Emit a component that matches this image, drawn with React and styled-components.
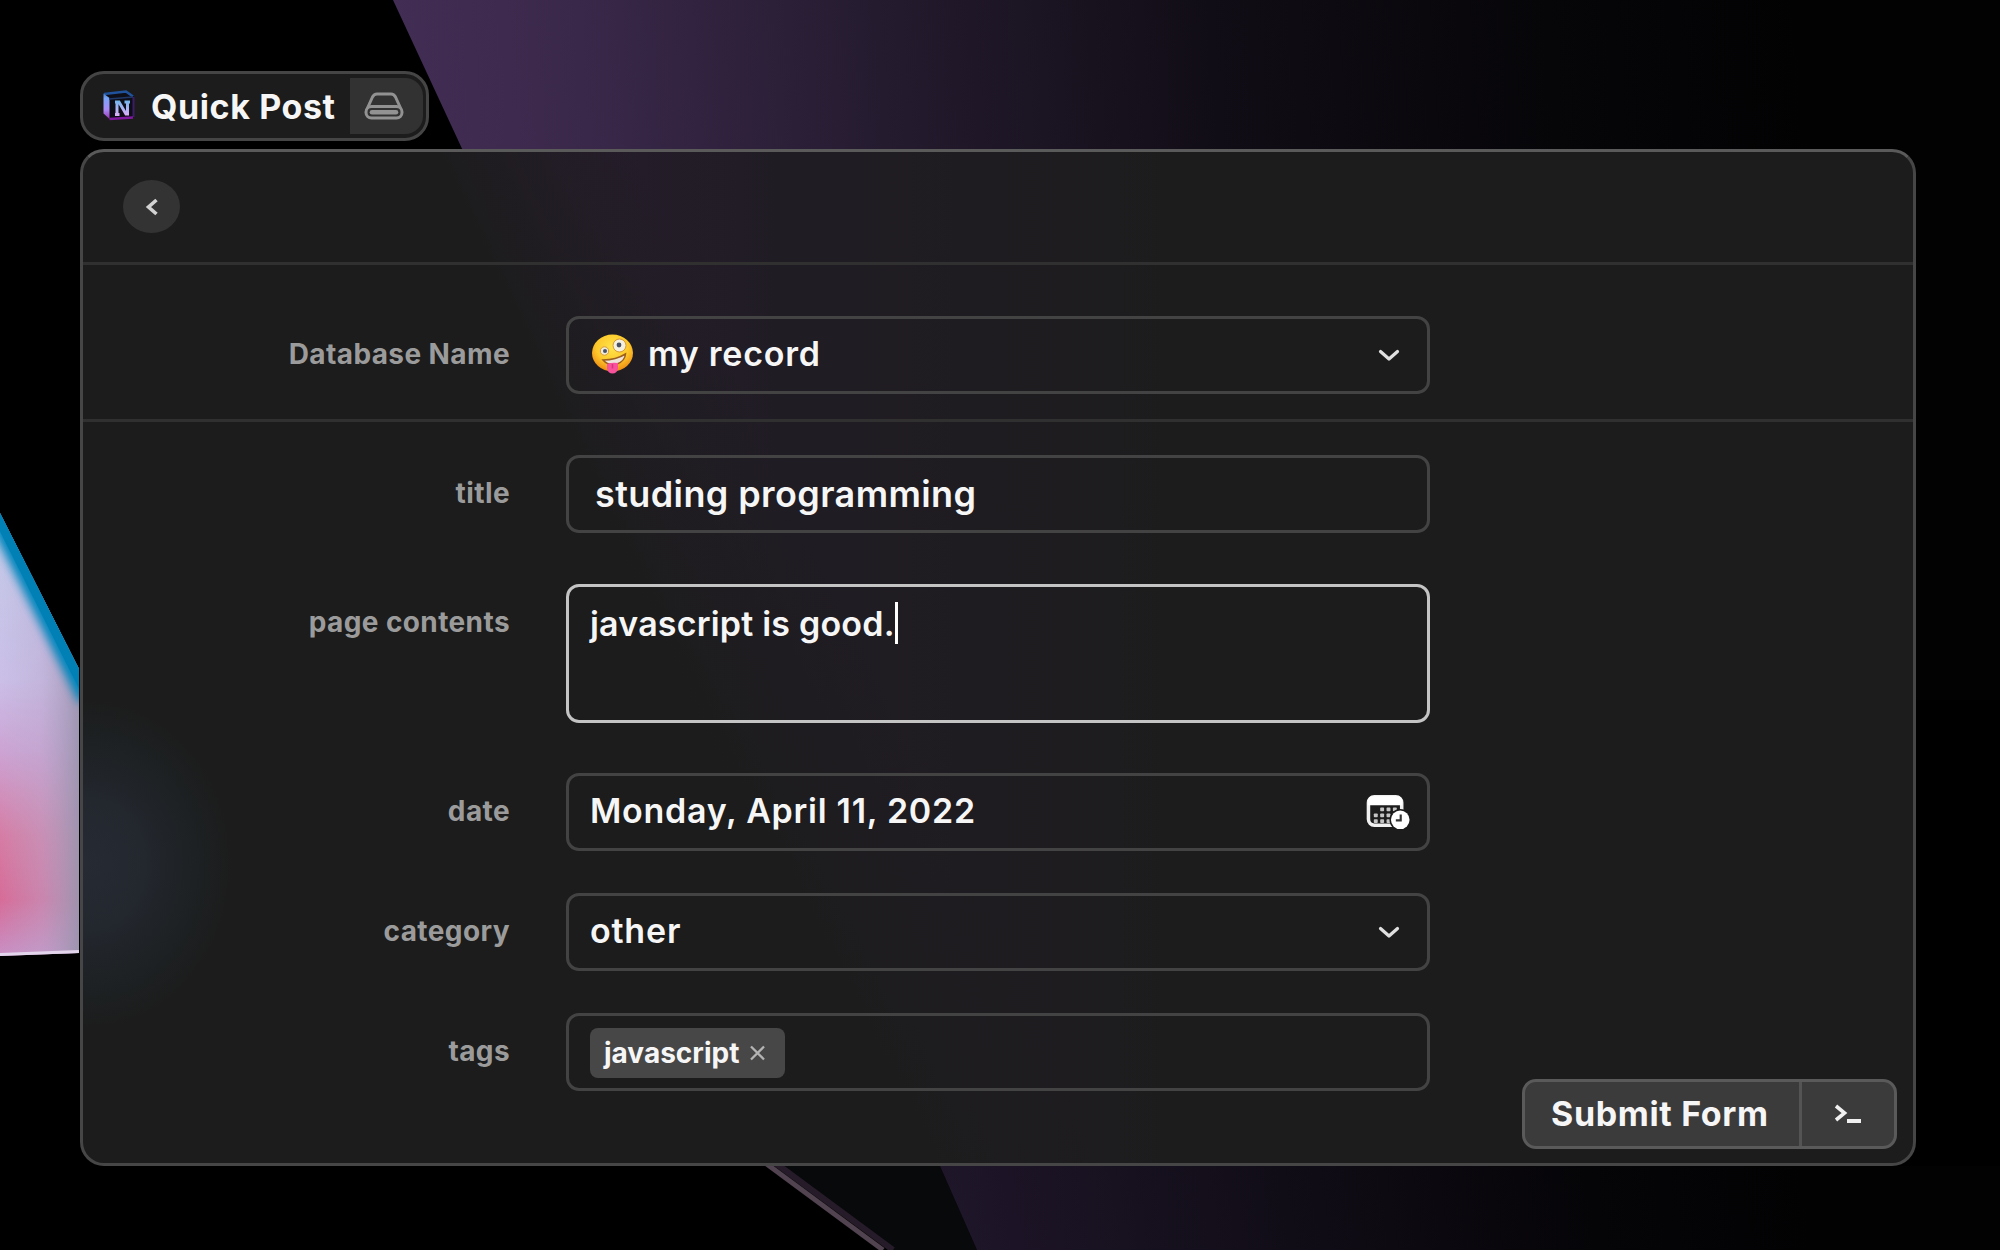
import React from "react";
import styled, { createGlobalStyle } from "styled-components";

const Global = createGlobalStyle`
  * { box-sizing: border-box; }
  html, body { margin: 0; background: #000; }
  body { font-family: Inter, "Liberation Sans", sans-serif; overflow: hidden; }
  button { font: inherit; color: inherit; margin: 0; }
`;

const Desktop = styled.main`
  position: relative;
  width: 2000px;
  height: 1250px;
  padding: 71px 83px 0 80px;
  overflow: hidden;
  color: #f6f6f6;
`;

const WallpaperSvg = styled.svg`
  position: absolute;
  inset: 0;
`;

const Pill = styled.header`
  position: relative;
  width: 349px;
  height: 70px;
  display: flex;
  align-items: center;
  padding: 4px 3px 4px 20px;
  border: 3px solid #454545;
  border-radius: 24px;
  background: #1c1c1c;
`;

const PillTitle = styled.h1`
  flex: 1;
  margin: 2px 0 0 16px;
  font-size: 34px;
  line-height: 56px;
  font-weight: 650;
  letter-spacing: 0.6px;
  white-space: nowrap;
`;

const DriveButton = styled.button`
  width: 73px;
  height: 56px;
  display: flex;
  align-items: center;
  padding: 0 0 0 14px;
  border: 0;
  border-radius: 0 18px 18px 0;
  background: #323232;
`;

const Panel = styled.section`
  position: relative;
  width: 1836px;
  height: 1017px;
  margin-top: 8px;
  border: 3px solid #464646;
  border-top-color: #5a5a5a;
  border-radius: 24px;
  background:
    radial-gradient(ellipse 145px 165px at 4px 712px, #262a33 0%, #23272e 40%, #1d2123 75%, rgba(28, 28, 28, 0) 100%),
    linear-gradient(64.8deg, #1c1c1c 35.5%, rgba(28, 28, 28, 0) 44.5%),
    linear-gradient(90deg, #261d2c 26%, #201c24 38%, #1f1c21 48%, #1c1c1c 62%);
`;

const Toolbar = styled.div`
  height: 113px;
  padding: 28px 40px 0;
  border-bottom: 3px solid #303030;
`;

const BackButton = styled.button`
  width: 57px;
  height: 53px;
  display: grid;
  place-items: center;
  padding: 0;
  border: 0;
  border-radius: 50%;
  background: #333;
`;

const Section = styled.div`
  padding-top: ${(p) => p.$top}px;
  height: ${(p) => p.$height || "auto"};
  border-bottom: ${(p) => (p.$divided ? "3px solid #303030" : "0")};
`;

const Row = styled.div`
  display: grid;
  grid-template-columns: 427px 864px;
  column-gap: 56px;
  margin-bottom: ${(p) => p.$gap || 0}px;
`;

const Label = styled.label`
  padding-top: 21px;
  text-align: right;
  font-size: 28px;
  line-height: 34px;
  font-weight: 650;
  letter-spacing: 0.4px;
  color: #9b9b9b;
  white-space: nowrap;
`;

const Field = styled.div`
  height: ${(p) => p.$height || 78}px;
  display: flex;
  align-items: ${(p) => (p.$height ? "flex-start" : "center")};
  padding: 0 16px 0 ${(p) => p.$inset || 21}px;
  border: 3px solid ${(p) => (p.$focused ? "#c4c4c4" : "#434343")};
  border-radius: 13px;
`;

const Value = styled.span`
  flex: ${(p) => (p.$fit ? "none" : 1)};
  font-size: ${(p) => p.$size || 34}px;
  line-height: 42px;
  font-weight: 600;
  letter-spacing: ${(p) => p.$track || 0}px;
  white-space: nowrap;
  margin-top: ${(p) => p.$drop || 0}px;
  margin-left: ${(p) => p.$indent || 0}px;
`;

const Caret = styled.span`
  width: 3px;
  height: 42px;
  margin-top: 15px;
  background: #fff;
`;

const Tag = styled.span`
  height: 50px;
  width: 195px;
  display: flex;
  align-items: center;
  padding-left: 14px;
  gap: 10px;
  border-radius: 8px;
  background: #474747;
  font-size: 28px;
  font-weight: 650;
  margin-top: 2px;
`;

const SubmitGroup = styled.div`
  position: absolute;
  right: 16px;
  bottom: 14px;
  width: 375px;
  height: 70px;
  display: flex;
  border: 3px solid #5a5a5b;
  border-radius: 14px;
  background: #3b3b3c;
`;

const SubmitButton = styled.button`
  width: 277px;
  padding: 0 0 2px 26px;
  border: 0;
  border-right: 3px solid #545455;
  background: transparent;
  text-align: left;
  font-size: 34px;
  font-weight: 650;
  letter-spacing: 0.65px;
  white-space: nowrap;
`;

const TerminalButton = styled.button`
  flex: 1;
  display: grid;
  place-items: center;
  padding: 0;
  border: 0;
  background: transparent;
`;

const Emoji = styled.svg`
  flex: none;
`;

const Wallpaper = () => (
  <WallpaperSvg width="2000" height="1250" viewBox="0 0 2000 1250" aria-hidden="true">
    <defs>
      <linearGradient id="beam" gradientUnits="userSpaceOnUse" x1="400" y1="100" x2="1800" y2="0">
        <stop offset="0" stopColor="#422d54" />
        <stop offset="0.13" stopColor="#3a284a" />
        <stop offset="0.36" stopColor="#231a2d" />
        <stop offset="0.58" stopColor="#110d16" />
        <stop offset="0.82" stopColor="#060508" />
        <stop offset="1" stopColor="#020203" />
      </linearGradient>
      <linearGradient id="beamLow" gradientUnits="userSpaceOnUse" x1="940" y1="1250" x2="1800" y2="1120">
        <stop offset="0" stopColor="#1f162a" />
        <stop offset="0.4" stopColor="#110d17" />
        <stop offset="0.75" stopColor="#050407" />
        <stop offset="1" stopColor="#020203" />
      </linearGradient>
      <linearGradient id="glass" gradientUnits="userSpaceOnUse" x1="0" y1="530" x2="0" y2="955">
        <stop offset="0" stopColor="#c3c9e8" />
        <stop offset="0.35" stopColor="#cbbfe8" />
        <stop offset="0.52" stopColor="#cda3d4" />
        <stop offset="0.72" stopColor="#d67ca4" />
        <stop offset="0.87" stopColor="#d76c98" />
        <stop offset="1" stopColor="#c98fc4" />
      </linearGradient>
      <linearGradient id="glassSide" x1="0" x2="1">
        <stop offset="0" stopColor="#b2b0cc" stopOpacity="0" />
        <stop offset="0.5" stopColor="#b8a8cc" stopOpacity="0.4" />
        <stop offset="1" stopColor="#9a94ae" stopOpacity="0.95" />
      </linearGradient>
      <filter id="soft" x="-50%" y="-20%" width="200%" height="140%"><feGaussianBlur stdDeviation="5" /></filter>
      <clipPath id="shard"><path d="M0 513L79 669V953L0 956Z" /></clipPath>
    </defs>
    <rect width="2000" height="1250" fill="#000" />
    <path d="M393 0H2000V700H718Z" fill="url(#beam)" />
    <path d="M768 1166H940L977 1250H893Z" fill="#07090b" />
    <path d="M940 1166H2000V1250H977Z" fill="url(#beamLow)" />
    <path d="M774 1162L893 1250" stroke="#261b28" strokeWidth="6" />
    <path d="M764 1162L883 1250" stroke="#51434f" strokeWidth="5" />
    <g clipPath="url(#shard)">
      <rect y="500" width="80" height="460" fill="url(#glass)" />
      <rect y="500" width="80" height="460" fill="url(#glassSide)" />
      <path d="M-10 498L90 698" stroke="#0086bd" strokeWidth="24" filter="url(#soft)" />
      <path d="M-10 495L90 694" stroke="#0080b5" strokeWidth="15" />
      <path d="M0 955L79 952" stroke="#e3d5ec" strokeWidth="4" />
    </g>
  </WallpaperSvg>
);

const NotionMark = () => (
  <svg width="32" height="32" viewBox="0 0 32 32" fill="none" aria-hidden="true">
    <defs>
      <linearGradient id="mark" x1="4" y1="0" x2="6" y2="32" gradientUnits="userSpaceOnUse">
        <stop stopColor="#2864b4" />
        <stop offset="0.25" stopColor="#78a4f8" />
        <stop offset="0.6" stopColor="#a98cf8" />
        <stop offset="1" stopColor="#90189c" />
      </linearGradient>
      <linearGradient id="letter" x1="0" y1="10" x2="0" y2="26" gradientUnits="userSpaceOnUse">
        <stop stopColor="#6cb4ec" />
        <stop offset="1" stopColor="#e0b0f8" />
      </linearGradient>
    </defs>
    <path d="M1 3L23 1L31 6V27L8 29.500L1 24Z" fill="#0e0e18" />
    <path d="M1 4L23 1.500L30 6.500" stroke="#20529c" strokeWidth="2.600" />
    <path d="M0.500 3.500L6.500 8V29L0.500 23.500Z" fill="url(#mark)" />
    <path d="M6 9L30 7" stroke="#203868" strokeWidth="1.600" />
    <path d="M30.500 7V27" stroke="#3c1c64" strokeWidth="2" />
    <path d="M6.500 29L30 27.500" stroke="#8018a0" strokeWidth="2.600" />
    <path d="M14 24.500V12.500M12 12H16L23 24H24.500V12M21.500 12H27M12 24.500H16.500" stroke="url(#letter)" strokeWidth="3" />
  </svg>
);

const DriveIcon = () => (
  <svg width="40" height="28" viewBox="0 0 40 28" fill="none" stroke="#929292" strokeWidth="3" strokeLinejoin="round" aria-hidden="true">
    <path d="M3.500 16L8.500 5Q10 2 13 2H27Q30 2 31.500 5L36.500 16" />
    <rect x="2" y="14.500" width="36" height="11.500" rx="5.500" />
    <path d="M8 20.200H32" strokeWidth="4.600" strokeLinecap="round" />
  </svg>
);

const BackIcon = () => (
  <svg width="16" height="20" viewBox="0 0 16 20" fill="none" aria-hidden="true">
    <path d="M12.500 3L4.500 10L12.500 17" stroke="#d2d2d2" strokeWidth="3.600" />
  </svg>
);

const ChevronIcon = () => (
  <svg width="46" height="24" viewBox="0 0 46 24" fill="none" aria-hidden="true">
    <path d="M15.500 8.500L24 16L32.500 8.500" stroke="#e0e0e0" strokeWidth="3.200" strokeLinecap="round" strokeLinejoin="round" />
  </svg>
);

const ZanyEmoji = () => (
  <Emoji width="43" height="42" viewBox="0 0 43 42" role="img" aria-label="zany face">
    <defs>
      <radialGradient id="face" cx="0.5" cy="0.35" r="0.65">
        <stop offset="0" stopColor="#ffe44a" />
        <stop offset="0.6" stopColor="#fdc92c" />
        <stop offset="1" stopColor="#ee8a12" />
      </radialGradient>
    </defs>
    <ellipse cx="21.500" cy="19" rx="20.500" ry="18.500" fill="url(#face)" />
    <circle cx="28.500" cy="11.500" r="6.500" fill="#f4f0e0" stroke="#d99a35" />
    <circle cx="28" cy="11" r="2.400" fill="#4a5064" />
    <circle cx="13.500" cy="17" r="4.200" fill="#f0ecdc" stroke="#d99a35" />
    <circle cx="14" cy="17" r="2" fill="#4c5266" />
    <path d="M12 26Q25 26 34.500 20Q34 27 26 30Q17 32 12 26Z" fill="#efe4dc" stroke="#9c5f1c" strokeWidth="1.500" />
    <path d="M16 30Q21 28 27 29V34.500Q26 39.500 21.500 39.500Q17 39.500 16 34.500Z" fill="#f7529b" />
    <path d="M21.500 30V34.500" stroke="#d93480" strokeWidth="1.500" />
  </Emoji>
);

const CalendarClockIcon = () => (
  <svg width="45" height="36" viewBox="0 0 46 36" fill="none" aria-hidden="true">
    <rect x="2.500" y="2.500" width="34" height="29" rx="6" stroke="#f0f0f0" strokeWidth="3.600" />
    <path d="M2 11V7Q2 2 7 2H32Q37 2 37 7V11Z" fill="#fff" />
    <g fill="#c4c4c4">
      {[13.5, 19.5, 25.5].map((y, r) =>
        [8, 14.5, 21, 27.5].map((x, c) =>
          (r === 0 && c === 0) || (r === 2 && c === 3) ? null : (
            <rect key={`${x}-${y}`} x={x} y={y} width="4" height="3.800" rx="0.800" />
          )
        )
      )}
    </g>
    <circle cx="35" cy="26" r="11" fill="#1c1c1c" />
    <circle cx="35" cy="26" r="9.500" fill="#fff" />
    <path d="M35.500 20.500V26.500H30.500" stroke="#333" strokeWidth="2.200" />
  </svg>
);

const CloseIcon = () => (
  <svg width="17" height="16" viewBox="0 0 17 16" fill="none" aria-hidden="true">
    <path d="M2 1.500L15 14.500M15 1.500L2 14.500" stroke="#b4b4b4" strokeWidth="2.300" />
  </svg>
);

const TerminalIcon = () => (
  <svg width="28" height="22" viewBox="0 0 28 22" fill="none" stroke="#f0f0f0" aria-hidden="true">
    <path d="M2 3L10.500 10L2 17" strokeWidth="3.600" />
    <path d="M13 18H27" strokeWidth="4" />
  </svg>
);

export default function App() {
  return (
    <>
      <Global />
      <Desktop>
        <Wallpaper />
        <Pill>
          <NotionMark />
          <PillTitle>Quick Post</PillTitle>
          <DriveButton aria-label="Drive"><DriveIcon /></DriveButton>
        </Pill>
        <Panel>
          <Toolbar>
            <BackButton aria-label="Back"><BackIcon /></BackButton>
          </Toolbar>
          <Section $top={51} $height="157px" $divided>
            <Row>
              <Label>Database Name</Label>
              <Field $inset={22}>
                <ZanyEmoji />
                <Value $indent={14} $track={0.75} $drop={-2}>my record</Value>
                <ChevronIcon />
              </Field>
            </Row>
          </Section>
          <Section $top={33}>
            <Row $gap={51}>
              <Label>title</Label>
              <Field $inset={26}><Value $size={36} $track={0.4}>studing programming</Value></Field>
            </Row>
            <Row $gap={50}>
              <Label>page contents</Label>
              <Field $height={139} $focused>
                <Value $fit $drop={16} $track={0.2}>javascript is good.</Value>
                <Caret />
              </Field>
            </Row>
            <Row $gap={42}>
              <Label>date</Label>
              <Field><Value $track={0.72} $drop={-2}>Monday, April 11, 2022</Value><CalendarClockIcon /></Field>
            </Row>
            <Row $gap={42}>
              <Label>category</Label>
              <Field><Value $track={0.8} $drop={-2}>other</Value><ChevronIcon /></Field>
            </Row>
            <Row>
              <Label>tags</Label>
              <Field><Tag>javascript<CloseIcon /></Tag></Field>
            </Row>
          </Section>
          <SubmitGroup>
            <SubmitButton>Submit Form</SubmitButton>
            <TerminalButton aria-label="Actions"><TerminalIcon /></TerminalButton>
          </SubmitGroup>
        </Panel>
      </Desktop>
    </>
  );
}
